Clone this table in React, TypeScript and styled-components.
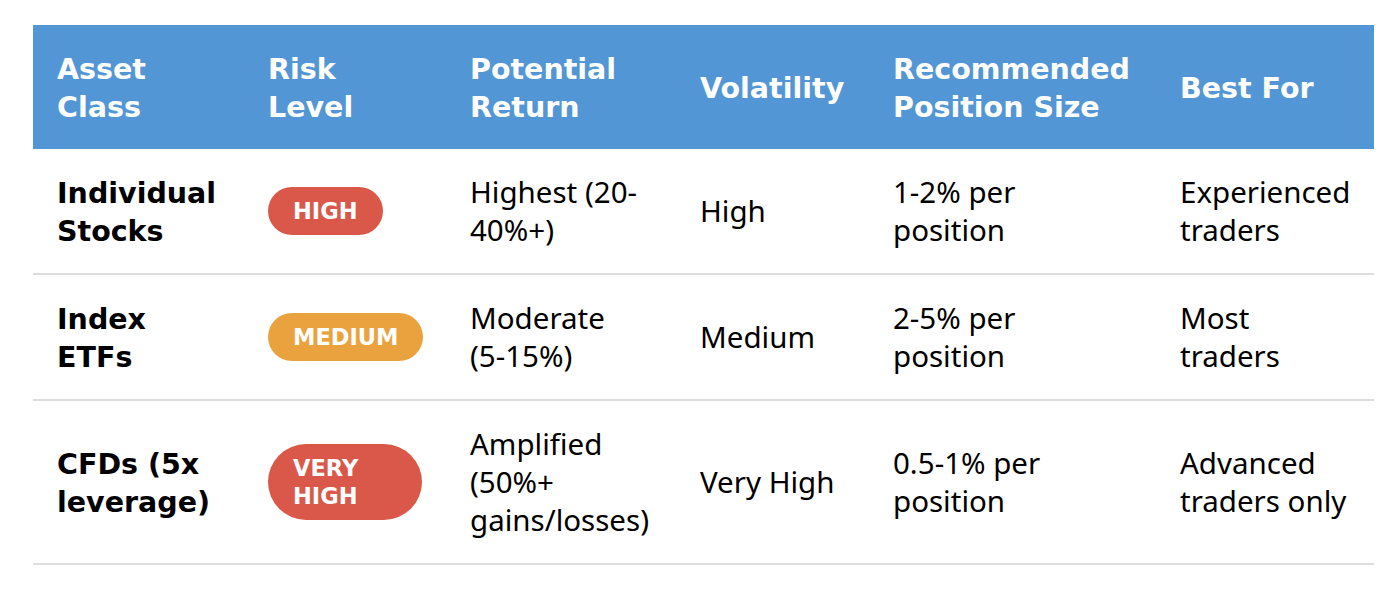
import React from "react";
import styled, { createGlobalStyle } from "styled-components";

const GlobalStyle = createGlobalStyle`
  html, body { margin: 0; padding: 0; background: #ffffff; }
  body { font-family: "Noto Sans", "DejaVu Sans", sans-serif; color: #000; }
`;

const Page = styled.div`
  padding: 25px 23px 0 33px;
`;

const Table = styled.table`
  width: 1341px;
  border-collapse: collapse;
  table-layout: fixed;
`;

const HeadCell = styled.th`
  background: #5296d5;
  color: #ffffff;
  font-family: "DejaVu Sans", "Noto Sans", sans-serif;
  font-weight: 700;
  font-size: 28.5px;
  line-height: 38px;
  text-align: left;
  vertical-align: middle;
  padding: 26px 24px 22px;
`;

const Row = styled.tr`
  border-bottom: 2px solid #dddddd;
`;

const Cell = styled.td<{ $bold?: boolean }>`
  font-family: ${(p) =>
    p.$bold ? `"DejaVu Sans", "Noto Sans", sans-serif` : `"Noto Sans", "DejaVu Sans", sans-serif`};
  font-weight: ${(p) => (p.$bold ? 700 : 400)};
  font-size: ${(p) => (p.$bold ? "28.5px" : "29.5px")};
  line-height: 38px;
  vertical-align: middle;
  padding: ${(p) => (p.$bold ? "26px 24px 22px" : "24px")};
`;

const Badge = styled.span<{ $tone: "high" | "medium" }>`
  display: inline-block;
  background: ${(p) => (p.$tone === "medium" ? "#eaa23e" : "#d9584a")};
  color: #ffffff;
  font-family: "DejaVu Sans", "Noto Sans", sans-serif;
  font-weight: 700;
  font-size: 22.5px;
  line-height: 28px;
  padding: 10px 25px;
  border-radius: 999px;
  text-transform: uppercase;
  vertical-align: middle;
`;

const NoWrap = styled.span`
  white-space: nowrap;
`;

type Tone = "high" | "medium";

const rows: {
  asset: React.ReactNode;
  risk: string;
  tone: Tone;
  ret: React.ReactNode;
  vol: string;
  size: string;
  best: string;
}[] = [
  {
    asset: "Individual Stocks",
    risk: "High",
    tone: "high",
    ret: (
      <>
        Highest (20-<wbr />40%+)
      </>
    ),
    vol: "High",
    size: "1-2% per position",
    best: "Experienced traders",
  },
  {
    asset: "Index ETFs",
    risk: "Medium",
    tone: "medium",
    ret: (
      <>
        Moderate <NoWrap>(5-15%)</NoWrap>
      </>
    ),
    vol: "Medium",
    size: "2-5% per position",
    best: "Most traders",
  },
  {
    asset: (
      <>
        CFDs <NoWrap>(5x</NoWrap> leverage)
      </>
    ),
    risk: "Very High",
    tone: "high",
    ret: (
      <>
        Amplified <NoWrap>(50%+</NoWrap> gains/losses)
      </>
    ),
    vol: "Very High",
    size: "0.5-1% per position",
    best: "Advanced traders only",
  },
];

export default function App() {
  return (
    <>
      <GlobalStyle />
      <Page>
        <Table>
          <colgroup>
            <col style={{ width: 211 }} />
            <col style={{ width: 202 }} />
            <col style={{ width: 230 }} />
            <col style={{ width: 193 }} />
            <col style={{ width: 287 }} />
            <col style={{ width: 218 }} />
          </colgroup>
          <thead>
            <tr>
              <HeadCell>Asset Class</HeadCell>
              <HeadCell>Risk Level</HeadCell>
              <HeadCell>Potential Return</HeadCell>
              <HeadCell>Volatility</HeadCell>
              <HeadCell>Recommended Position Size</HeadCell>
              <HeadCell>Best For</HeadCell>
            </tr>
          </thead>
          <tbody>
            {rows.map((r, i) => (
              <Row key={i}>
                <Cell $bold>{r.asset}</Cell>
                <Cell>
                  <Badge $tone={r.tone}>{r.risk}</Badge>
                </Cell>
                <Cell>{r.ret}</Cell>
                <Cell>{r.vol}</Cell>
                <Cell>{r.size}</Cell>
                <Cell>{r.best}</Cell>
              </Row>
            ))}
          </tbody>
        </Table>
      </Page>
    </>
  );
}
